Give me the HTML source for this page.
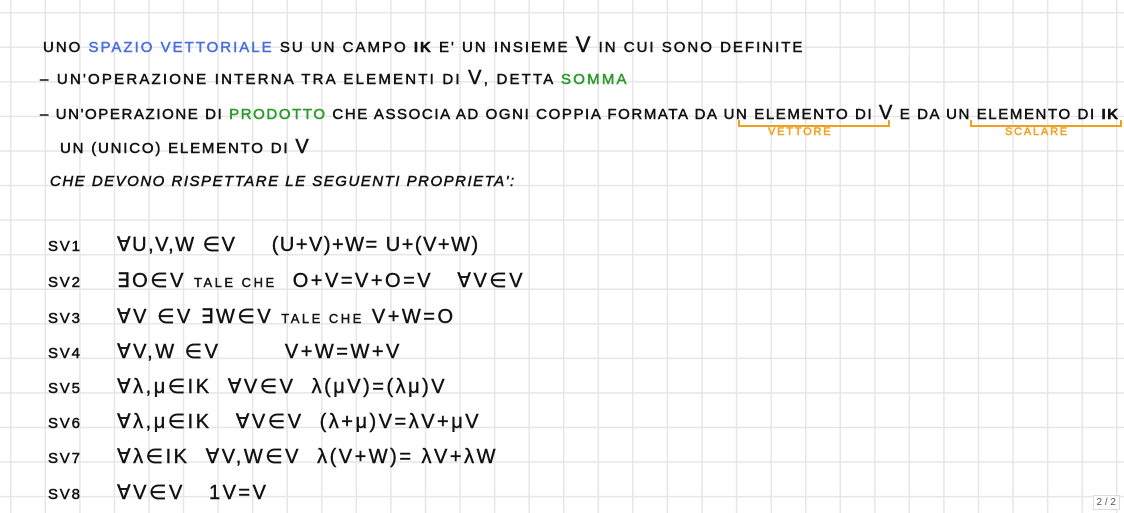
<!DOCTYPE html>
<html><head><meta charset="utf-8"><style>
html,body{margin:0;padding:0}
body{width:1124px;height:513px;overflow:hidden;position:relative;background-color:#fff;
background-image:linear-gradient(to right,#e6e6e6 1.5px,transparent 1.5px),linear-gradient(to bottom,#e6e6e6 1.5px,transparent 1.5px);
background-size:34.57px 34.57px;background-position:10px 12px;
font-family:"Liberation Sans",sans-serif;color:#111;}
.t{position:absolute;white-space:nowrap;font-size:15px;letter-spacing:1.8px;-webkit-text-stroke:0.5px currentColor}
.b{color:#4a6ee0}.g{color:#2a9a2a}.o{color:#f0a020}
.l{position:absolute;font-size:20px;letter-spacing:2.5px;white-space:nowrap;-webkit-text-stroke:0.4px #111}
.br{position:absolute;border:2px solid #f0a020;border-top:none;height:5px}
.pg{position:absolute;right:4px;bottom:3px;font-size:10px;color:#555;background:#fff;padding:1px 3px;border:1px solid #ddd}
</style></head><body>
<div class="t" style="left:43px;top:32px;letter-spacing:2px">UNO <span class="b">SPAZIO VETTORIALE</span> SU UN CAMPO <b>IK</b> E' UN INSIEME <span style="font-size:22px">V</span> IN CUI SONO DEFINITE</div>
<div class="t" style="left:40px;top:67px;letter-spacing:2.2px">– UN'OPERAZIONE INTERNA TRA ELEMENTI DI <span style="font-size:20px">V</span>, DETTA <span class="g">SOMMA</span></div>
<div class="t" style="left:40px;top:102px;letter-spacing:1.6px">– UN'OPERAZIONE DI <span class="g">PRODOTTO</span> CHE ASSOCIA AD OGNI COPPIA FORMATA DA UN ELEMENTO DI <span style="font-size:20px">V</span> E DA UN ELEMENTO DI <b>IK</b></div>
<div class="br" style="left:738px;top:120px;width:148px"></div>
<div class="t o" style="left:768px;top:126px;font-size:11px">VETTORE</div>
<div class="br" style="left:970px;top:120px;width:148px"></div>
<div class="t o" style="left:1005px;top:126px;font-size:11px">SCALARE</div>
<div class="t" style="left:60px;top:136px">UN (UNICO) ELEMENTO DI <span style="font-size:20px">V</span></div>
<div class="t" style="left:50px;top:173px;font-style:italic;letter-spacing:1.5px">CHE DEVONO RISPETTARE LE SEGUENTI PROPRIETA':</div>

<div class="t" style="left:48px;top:238px">SV1</div><div class="l" style="left:117px;top:232px;letter-spacing:1.5px">∀U,V,W ∈V &nbsp;&nbsp;&nbsp;&nbsp;(U+V)+W= U+(V+W)</div>
<div class="t" style="left:48px;top:274px">SV2</div><div class="l" style="left:117px;top:268px">∃O∈V <span style="font-size:13px">TALE CHE</span> &nbsp;O+V=V+O=V &nbsp;&nbsp;∀V∈V</div>
<div class="t" style="left:48px;top:310px">SV3</div><div class="l" style="left:117px;top:304px">∀V ∈V ∃W∈V <span style="font-size:13px">TALE CHE</span> V+W=O</div>
<div class="t" style="left:48px;top:345px">SV4</div><div class="l" style="left:117px;top:339px">∀V,W ∈V &nbsp;&nbsp;&nbsp;&nbsp;&nbsp;&nbsp;&nbsp;V+W=W+V</div>
<div class="t" style="left:48px;top:380px">SV5</div><div class="l" style="left:117px;top:374px">∀λ,μ∈IK &nbsp;∀V∈V &nbsp;λ(μV)=(λμ)V</div>
<div class="t" style="left:48px;top:415px">SV6</div><div class="l" style="left:117px;top:409px">∀λ,μ∈IK &nbsp;&nbsp;∀V∈V &nbsp;(λ+μ)V=λV+μV</div>
<div class="t" style="left:48px;top:450px">SV7</div><div class="l" style="left:117px;top:444px">∀λ∈IK &nbsp;∀V,W∈V &nbsp;λ(V+W)= λV+λW</div>
<div class="t" style="left:48px;top:486px">SV8</div><div class="l" style="left:117px;top:480px">∀V∈V &nbsp;&nbsp;1V=V</div>
<div class="pg">2 / 2</div>
</body></html>
